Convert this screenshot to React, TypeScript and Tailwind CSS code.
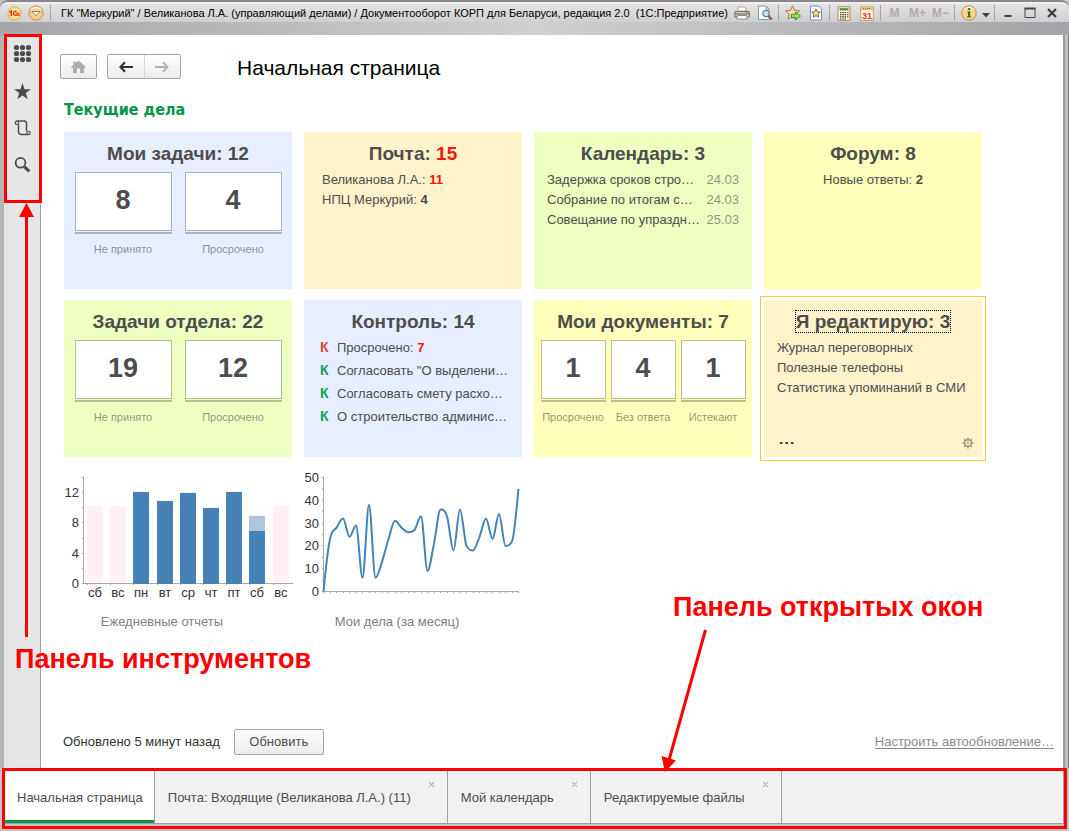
import type { ReactNode } from "react";

interface Counter {
  value: number;
  label: string;
}

interface Tab {
  title: string;
  active?: boolean;
}

const SANS = "font-['Liberation_Sans',Arial,sans-serif]";

const TABS: Tab[] = [
  { title: "Начальная страница", active: true },
  { title: "Почта: Входящие (Великанова Л.А.) (11)" },
  { title: "Мой календарь" },
  { title: "Редактируемые файлы" },
];

const EVENTS = [
  { title: "Задержка сроков стро…", date: "24.03" },
  { title: "Собрание по итогам с…", date: "24.03" },
  { title: "Совещание по упраздн…", date: "25.03" },
];

const CONTROL = [
  'Согласовать "О выделени…',
  "Согласовать смету расхо…",
  "О строительство админис…",
];

// x and top of each column; rest days are drawn pale
const BARS = [
  { day: "сб", x: 87, top: 507, rest: true },
  { day: "вс", x: 110, top: 507, rest: true },
  { day: "пн", x: 133, top: 492 },
  { day: "вт", x: 157, top: 501 },
  { day: "ср", x: 180, top: 493 },
  { day: "чт", x: 203, top: 508 },
  { day: "пт", x: 226, top: 492 },
  { day: "сб", x: 249, top: 531, extra: 516 },
  { day: "вс", x: 273, top: 507, rest: true },
];

const MONTH = [
  0, 23, 28, 32, 24, 29, 6, 38, 6, 13, 23, 31, 28, 26, 27, 33, 9, 21, 36, 33,
  18, 36, 20, 18, 24, 32, 23, 34, 20, 22, 45,
];

// Monotone cubic through the points, so peaks never overshoot.
function smoothPath(pts: [number, number][]): string {
  const n = pts.length;
  const slope = pts
    .slice(1)
    .map((p, i) => (p[1] - pts[i][1]) / (p[0] - pts[i][0]));
  const tan = pts.map((_, i) => {
    if (i === 0) return slope[0] * 1.3;
    if (i === n - 1) return slope[n - 2] * 1.3;
    const a = slope[i - 1];
    const b = slope[i];
    if (a * b <= 0) return 0;
    const m = (a + b) / 2;
    return Math.sign(m) * Math.min(Math.abs(m), 3 * Math.abs(a), 3 * Math.abs(b));
  });
  let d = `M${pts[0][0]},${pts[0][1]}`;
  for (let i = 1; i < n; i++) {
    const [x0, y0] = pts[i - 1];
    const [x1, y1] = pts[i];
    const h = (x1 - x0) / 3;
    d += `C${x0 + h},${y0 + tan[i - 1] * h} ${x1 - h},${y1 - tan[i] * h} ${x1},${y1}`;
  }
  return d;
}

function BarButton({
  label,
  className = "w-[23px]",
  children,
}: {
  label: string;
  className?: string;
  children: ReactNode;
}) {
  return (
    <button
      type="button"
      aria-label={label}
      className={`flex h-5 flex-none items-center justify-center ${className}`}
    >
      {children}
    </button>
  );
}

function Divider() {
  return <span className="mx-0.5 h-4 w-px flex-none bg-[#a3a3a3]" />;
}

function TitleBar() {
  return (
    <header className="flex h-[35px] flex-none flex-col overflow-hidden rounded-t-lg border-t-2 border-[#8b878a] bg-linear-to-r from-[#a6a6aa] via-[#d0d0d0] to-[#a4a4a8]">
      <div className="flex h-5 flex-none items-center border-t-2 border-[#efefef] bg-linear-to-b from-[#e4e4e5] to-[#cfcfd0] pr-[7px] pl-1">
        <BarButton label="Главное меню" className="ml-0.5 w-4">
          <svg width="15" height="15" viewBox="0 0 15 15">
            <circle cx="7.5" cy="7.5" r="6.6" fill="#fbe08a" stroke="#dfae4e" />
            <path d="M2.6 6.3l1.7-1.4v5.2" fill="none" stroke="#d8291c" strokeWidth="1.4" />
            <path d="M9.5 5.6a2 2 0 1 0-1.7 3.6h5" fill="none" stroke="#d8291c" strokeWidth="1.3" />
            <path d="M8.6 7.3h4" stroke="#d8291c" strokeWidth="1" />
          </svg>
        </BarButton>
        <BarButton label="Меню" className="ml-1.5 w-4">
          <svg width="16" height="16" viewBox="0 0 16 16">
            <circle cx="8" cy="8" r="7.1" fill="#f6ce93" stroke="#c98f45" />
            <path d="M3 5.2a6 6 0 0 1 10 0" fill="none" stroke="#fff3dc" strokeWidth="1.5" />
            <path d="M3.8 6.5h8.4L8 10.8z" fill="#fff" stroke="#8a5f38" strokeWidth=".8" />
          </svg>
        </BarButton>
        <span className="ml-1.5 h-4 w-px flex-none bg-[#a3a3a3]" />
        <span className="ml-2.5 min-w-0 flex-1 text-[11px] leading-[18px] whitespace-pre text-black">
          {
            'ГК "Меркурий" / Великанова Л.А. (управляющий делами) / Документооборот КОРП для Беларуси, редакция 2.0  (1С:Предприятие)'
          }
        </span>
        <BarButton label="Печать">
          <svg width="16" height="16" viewBox="0 0 16 16">
            <path d="M4 6V2h6l2 1.5V6z" fill="#fff" stroke="#999" strokeWidth=".8" />
            <path d="M1 6.5h14l.6 5.5H.6z" fill="#d9d4cb" stroke="#6f6d6b" />
            <path d="M1 9h14" stroke="#5a5a5a" />
            <rect x="11" y="7" width="2.5" height="1.2" fill="#e08a3c" />
            <path d="M3.5 10.5h9l.8 3.5H2.7z" fill="#fff" stroke="#777" strokeWidth=".8" />
          </svg>
        </BarButton>
        <BarButton label="Предварительный просмотр">
          <svg width="16" height="16" viewBox="0 0 16 16">
            <path d="M1.5 1h7.5l3 3v10.5H1.5z" fill="#fff" stroke="#7d9cc0" />
            <path d="M9 1v3h3" fill="none" stroke="#7d9cc0" />
            <circle cx="9" cy="8.5" r="3.2" fill="#cfe2f2" stroke="#6d7d8d" strokeWidth="1.2" />
            <path d="M11.5 11l3.3 3.5" stroke="#8a563f" strokeWidth="2.2" />
          </svg>
        </BarButton>
        <Divider />
        <BarButton label="Добавить в избранное">
          <svg width="16" height="16" viewBox="0 0 16 16">
            <path d="M7.5.8l2 4.7 5 .4-3.8 3.3 1.2 5-4.4-2.7-4.4 2.7 1.2-5L.6 5.9l5-.4z" fill="#fbe2ac" stroke="#9a7b52" />
            <path d="M6.5 9.2h4V7l5 4-5 4v-2.4h-4z" fill="#9be054" stroke="#2f8a1c" strokeWidth=".9" />
          </svg>
        </BarButton>
        <BarButton label="Избранное">
          <svg width="16" height="16" viewBox="0 0 16 16">
            <path d="M2.5 1h8l3 3v11h-11z" fill="#fff" stroke="#6f94bb" />
            <path d="M8 4l1.3 2.8 3 .3-2.2 2 .6 3L8 10.6l-2.7 1.5.6-3-2.2-2 3-.3z" fill="#fbd98a" stroke="#6b5a49" strokeWidth=".9" />
          </svg>
        </BarButton>
        <Divider />
        <BarButton label="Калькулятор">
          <svg width="14" height="15" viewBox="0 0 14 15">
            <rect x="1" y=".8" width="12" height="13.6" fill="#fff6da" stroke="#b08a5c" />
            <rect x="2.5" y="2.2" width="9" height="2.2" fill="#4d8c3c" />
            <path d="M3 6.5h6M3 8.7h6M3 10.9h6M3 13h6" stroke="#333" strokeWidth="1.2" strokeDasharray="1.5 .8" />
            <path d="M10 6.5h1.6M10 8.7h1.6M10 10.9h1.6" stroke="#cf3a25" strokeWidth="1.2" />
          </svg>
        </BarButton>
        <BarButton label="Календарь">
          <svg width="14" height="15" viewBox="0 0 14 15">
            <rect x=".7" y="1" width="12.6" height="13.4" fill="#fff7e6" stroke="#c99d63" />
            <rect x="1" y="1.2" width="12" height="3" fill="#f0c07c" />
            <path d="M3 2.6h8" stroke="#8f6a3d" strokeDasharray="1 1" />
            <text x="7" y="12.6" textAnchor="middle" className="fill-[#e23a1f] font-['Liberation_Sans',Arial,sans-serif] text-[9px] font-bold">
              31
            </text>
          </svg>
        </BarButton>
        <Divider />
        {["M", "M+", "M−"].map((m) => (
          <BarButton key={m} label={`Память ${m}`}>
            <span className={`${SANS} text-[12px] font-bold text-[#b3a9a5]`}>{m}</span>
          </BarButton>
        ))}
        <Divider />
        <BarButton label="Справка">
          <svg width="16" height="16" viewBox="0 0 16 16">
            <circle cx="8" cy="8" r="7.2" fill="#fbd58c" stroke="#c78a38" />
            <path d="M3 5a6 6 0 0 1 10 0" fill="none" stroke="#fff2d4" strokeWidth="1.4" />
            <path d="M7 3h2.2v2H7zM6.4 6.3h2.8v5h1v1.3H6v-1.3h1V7.5h-.6z" fill="#3f7a1e" />
          </svg>
        </BarButton>
        <BarButton label="Ещё" className="w-3 pt-1">
          <svg width="8" height="5" viewBox="0 0 8 5">
            <path d="M0 0h8L4 4.5z" fill="#444" />
          </svg>
        </BarButton>
        <Divider />
        <BarButton label="Свернуть" className="w-[21px]">
          <svg width="12" height="12" viewBox="0 0 12 12">
            <path d="M2.5 9h7" stroke="#444" strokeWidth="2" />
          </svg>
        </BarButton>
        <BarButton label="Развернуть">
          <svg width="12" height="12" viewBox="0 0 12 12">
            <path d="M1 1.5h10v9H1z" fill="none" stroke="#444" />
            <path d="M.5 1.5h11" stroke="#444" strokeWidth="2" />
          </svg>
        </BarButton>
        <BarButton label="Закрыть" className="w-[21px]">
          <svg width="10" height="10" viewBox="0 0 10 10">
            <path d="M1 1l8 8M9 1L1 9" stroke="#3d3d3d" strokeWidth="2.2" />
          </svg>
        </BarButton>
      </div>
    </header>
  );
}

function ToolPanel() {
  return (
    <aside className="relative w-[41px] flex-none border-r border-l-4 border-r-[#a0a0a0] border-l-[#b4b4b4] bg-[#e6e6e6]">
      <div className="flex flex-col items-center gap-[17px] pt-[9px]">
        <button type="button" aria-label="Разделы">
          <svg width="20" height="20" viewBox="0 0 20 20" fill="#4d4d4d">
            {[4, 10, 16].map((cy) =>
              [4.5, 10.5, 16.5].map((cx) => (
                <circle key={`${cx}-${cy}`} cx={cx} cy={cy - 0.5} r="2.6" />
              )),
            )}
          </svg>
        </button>
        <button type="button" aria-label="Избранное">
          <svg width="20" height="20" viewBox="0 0 20 20" fill="#4d4d4d">
            <path d="M10.500 2l2 6.200H19l-5.200 3.800 2 6.200-5.300-3.800-5.300 3.800 2-6.200L2 8.200h6.500z" />
          </svg>
        </button>
        <button type="button" aria-label="История">
          <svg width="20" height="20" viewBox="0 0 20 20" fill="none" stroke="#4d4d4d">
            <path d="M6.500 6.500V14a3 3 0 0 0 3 2.600h7" strokeWidth="1.5" />
            <path d="M4.700 3h7.600a2.200 2.200 0 0 1 2.200 2.200v8" strokeWidth="1.5" />
            <circle cx="4.900" cy="4.800" r="1.7" strokeWidth="1.1" />
            <circle cx="16.500" cy="14.900" r="1.7" strokeWidth="1.1" />
          </svg>
        </button>
        <button type="button" aria-label="Поиск">
          <svg width="20" height="20" viewBox="0 0 20 20" fill="none" stroke="#4d4d4d">
            <circle cx="8.500" cy="7.800" r="4.900" strokeWidth="1.8" />
            <path d="M12.500 11.800l4.800 4.600" strokeWidth="3" />
          </svg>
        </button>
      </div>
      <div className="pointer-events-none absolute -top-px -right-0.5 left-0 h-[169px] border-[3px] border-[#fe0000]" />
    </aside>
  );
}

function Tile({
  title,
  count,
  className,
  alert = false,
  focused = false,
  children,
}: {
  title: string;
  count: number;
  className: string;
  alert?: boolean;
  focused?: boolean;
  children: ReactNode;
}) {
  return (
    <section className={`relative h-[157px] pt-[11px] ${className}`}>
      <h3 className="text-center text-[19px] leading-[22px] font-bold text-[#4d4d4d]">
        <span className={focused ? "outline-1 outline-black outline-dotted" : ""}>
          {title}: <span className={alert ? "text-[#f01800]" : ""}>{count}</span>
        </span>
      </h3>
      {children}
    </section>
  );
}

function Counters({
  items,
  className,
  boxClass,
  lineClass,
}: {
  items: Counter[];
  className: string;
  boxClass: string;
  lineClass: string;
}) {
  return (
    <div className={`flex pt-[7px] ${className}`}>
      {items.map((c) => (
        <div key={c.label} className={`flex flex-none flex-col items-center ${boxClass}`}>
          <div className={`w-full border-b-2 pb-px ${lineClass}`}>
            <div
              className={`flex h-[59px] items-center justify-center border bg-white pb-1 text-[27px] leading-8 font-bold text-[#4d4d4d] ${lineClass}`}
            >
              {c.value}
            </div>
          </div>
          <span className="mt-[7px] text-[11px] leading-4 whitespace-nowrap text-[#4d4d4d]/60">
            {c.label}
          </span>
        </div>
      ))}
    </div>
  );
}

function ReportsChart() {
  return (
    <figure>
      <svg width="230" height="132" viewBox="64 468 230 132" className="overflow-visible">
        <path d="M83.5 477v106.500H293" fill="none" stroke="#a8a8a8" />
        {[477, 492, 507, 522, 538, 553, 568, 583].map((y) => (
          <path key={y} d={`M82 ${y + 0.5}h2`} stroke="#a8a8a8" />
        ))}
        {BARS.map((b) => (
          <g key={b.x}>
            <path d={`M${b.x + 0.5} 583v2`} stroke="#a8a8a8" />
            <rect x={b.x} y={(b.extra ?? b.top) - 1} width="16" height={585 - (b.extra ?? b.top) - 1} fill="#fff0f5" />
            {b.extra && (
              <rect x={b.x} y={b.extra} width="16" height={b.top - b.extra} fill="#b0c4de" />
            )}
            {!b.rest && (
              <rect x={b.x} y={b.top} width="16" height={584 - b.top} fill="#4682b4" />
            )}
            <text x={b.x + 8} y="597" textAnchor="middle" className="fill-[#333] text-[13px]">
              {b.day}
            </text>
          </g>
        ))}
        {[12, 8, 4, 0].map((v, i) => (
          <text key={v} x="79" y={[497, 527, 558, 588][i]} textAnchor="end" className="fill-[#333] text-[13px]">
            {v}
          </text>
        ))}
      </svg>
      <figcaption className="mt-3 pr-8 text-center text-[13px] leading-5 text-[#808080]">
        Ежедневные отчеты
      </figcaption>
    </figure>
  );
}

function MonthChart() {
  const pts = MONTH.map((v, i): [number, number] => [
    323.5 + i * 6.5,
    591.5 - v * 2.28,
  ]);

  return (
    <figure>
      <svg width="218" height="132" viewBox="304 468 218 132" className="overflow-visible">
        <path d="M323.5 477v114.500H519" fill="none" stroke="#a8a8a8" />
        {[0, 1, 2, 3, 4, 5, 6, 7, 8, 9, 10].map((i) => (
          <path key={i} d={`M322 ${Math.round(477 + i * 11.4) + 0.5}h2`} stroke="#a8a8a8" />
        ))}
        {pts.map(([x]) => (
          <path key={x} d={`M${Math.floor(x) + 0.5} 591v2`} stroke="#a8a8a8" />
        ))}
        <path d={smoothPath(pts)} fill="none" stroke="#4682b4" strokeWidth="2" />
        {[50, 40, 30, 20, 10, 0].map((v) => (
          <text key={v} x="319" y={Math.round(596 - v * 2.28)} textAnchor="end" className="fill-[#333] text-[13px]">
            {v}
          </text>
        ))}
      </svg>
      <figcaption className="mt-3 pr-8 text-center text-[13px] leading-5 text-[#808080]">
        Мои дела (за месяц)
      </figcaption>
    </figure>
  );
}

function Dashboard() {
  return (
    <div className="grid grid-cols-[228px_218px_218px_218px] gap-x-3 gap-y-[11px]">
      <Tile title="Мои задачи" count={12} className="bg-[#e6eeff]">
        <Counters
          items={[
            { value: 8, label: "Не принято" },
            { value: 4, label: "Просрочено" },
          ]}
          className="justify-center gap-[13px]"
          boxClass="w-[97px]"
          lineClass="border-[#acb3c0]"
        />
      </Tile>
      <Tile title="Почта" count={15} alert className="bg-[#fff3cc]">
        <ul className="px-[18px] pt-[5px] text-[13px] leading-5 text-[#4d4d4d]">
          <li>
            Великанова Л.А.: <b className="text-[#f01800]">11</b>
          </li>
          <li>
            НПЦ Меркурий: <b>4</b>
          </li>
        </ul>
      </Tile>
      <Tile title="Календарь" count={3} className="bg-[#efffc2]">
        <ul className="px-[13px] pt-[5px] text-[13px] leading-5 text-[#4d4d4d]">
          {EVENTS.map((e) => (
            <li key={e.title} className="flex justify-between">
              <span>{e.title}</span>
              <span className="text-[#4d4d4d]/60">{e.date}</span>
            </li>
          ))}
        </ul>
      </Tile>
      <Tile title="Форум" count={8} className="bg-[#fdffba]">
        <p className="pt-[5px] text-center text-[13px] leading-5 text-[#4d4d4d]">
          Новые ответы: <b>2</b>
        </p>
      </Tile>

      <Tile title="Задачи отдела" count={22} className="bg-[#efffc2]">
        <Counters
          items={[
            { value: 19, label: "Не принято" },
            { value: 12, label: "Просрочено" },
          ]}
          className="justify-center gap-[13px]"
          boxClass="w-[97px]"
          lineClass="border-[#b3bf92]"
        />
      </Tile>
      <Tile title="Контроль" count={14} className="bg-[#e6eeff]">
        <ul className="pt-[3px] pl-4 text-[13px] leading-[23px] whitespace-nowrap text-[#4d4d4d]">
          <li className="flex">
            <b className="w-[17px] flex-none text-[14px] text-[#d94f3d]">К</b>
            <span>
              Просрочено: <b className="text-[#f01800]">7</b>
            </span>
          </li>
          {CONTROL.map((c) => (
            <li key={c} className="flex">
              <b className="w-[17px] flex-none text-[14px] text-[#0fa05a]">К</b>
              <span>{c}</span>
            </li>
          ))}
        </ul>
      </Tile>
      <Tile title="Мои документы" count={7} className="bg-[#fdffba]">
        <Counters
          items={[
            { value: 1, label: "Просрочено" },
            { value: 4, label: "Без ответа" },
            { value: 1, label: "Истекают" },
          ]}
          className="justify-center gap-[5px]"
          boxClass="w-[65px]"
          lineClass="border-[#bec08c]"
        />
      </Tile>
      <Tile
        title="Я редактирую"
        count={3}
        focused
        className="flex flex-col bg-[#fff3cc] outline-1 outline-offset-3 outline-[#f8cc20]"
      >
        <ul className="px-[13px] pt-[5px] text-[13px] leading-5 text-[#4d4d4d]">
          <li>Журнал переговорных</li>
          <li>Полезные телефоны</li>
          <li>Статистика упоминаний в СМИ</li>
        </ul>
        <div className="mt-auto flex items-center justify-between px-2 pb-1.5">
          <button type="button" aria-label="Показать все" className="pl-2">
            <svg width="14" height="4" viewBox="0 0 14 4" fill="#3d3d3d">
              <path d="M0 1h2.500v2H0zM5.500 1H8v2H5.500zM11 1h2.500v2H11z" />
            </svg>
          </button>
          <button type="button" aria-label="Настроить">
            <svg width="12" height="16" viewBox="-6 -8 12 16" fill="none" stroke="#a39c84">
              <circle r="3.300" strokeWidth="1.500" />
              <circle r="1" strokeWidth=".8" />
              {[0, 45, 90, 135, 180, 225, 270, 315].map((a) => (
                <path key={a} d="M0-3.500V-5.400" strokeWidth="1.700" transform={`rotate(${a})`} />
              ))}
            </svg>
          </button>
        </div>
      </Tile>

      <ReportsChart />
      <MonthChart />
    </div>
  );
}

function OpenWindows() {
  return (
    <nav className="mr-0.5 mb-0.5 ml-0.5 flex-none border-[3px] border-[#fe0000] bg-[#c8c8c8] pb-0.5">
      <div className="flex h-[53px] border-r border-b border-[#a0a0a0] bg-[#f1f1f1]">
        {TABS.map((t) => (
          <div
            key={t.title}
            className={`relative flex border-r border-[#a0a0a0] ${t.active ? "bg-white" : ""}`}
          >
            <a
              href="#"
              className={`flex items-center text-[13px] whitespace-nowrap text-[#4d4d4d] ${
                t.active ? "border-b-[3px] border-[#009646] pt-1 pr-[11px] pl-3" : "pt-px pr-9 pl-[13px]"
              }`}
            >
              {t.title}
            </a>
            {!t.active && (
              <button type="button" aria-label="Закрыть вкладку" className="absolute top-2.5 right-3">
                <svg width="7" height="7" viewBox="0 0 7 7" className="block">
                  <path d="M1 1l5 5M6 1L1 6" stroke="#999" />
                </svg>
              </button>
            )}
          </div>
        ))}
      </div>
    </nav>
  );
}

// Red callouts that name the two panels
function Callouts() {
  return (
    <div className="pointer-events-none absolute inset-0 text-[27px] leading-8 font-bold whitespace-nowrap text-[#fe0000]">
      <svg className="absolute inset-0 h-full w-full" fill="#fe0000" stroke="#fe0000">
        <path d="M26.500 637V214" strokeWidth="3" />
        <path d="M26.500 203l7.500 14H19z" stroke="none" />
        <path d="M705.500 630L669 760" strokeWidth="3" />
        <path d="M665 772l-3.500-16 14.500 4.500z" stroke="none" />
      </svg>
      <p className="absolute top-[643px] left-[15px]">Панель инструментов</p>
      <p className="absolute top-[591px] left-[673px]">Панель открытых окон</p>
    </div>
  );
}

export default function App() {
  return (
    <div className={`relative flex min-h-screen flex-col bg-[#c4c4c4] ${SANS}`}>
      <TitleBar />
      <div className="flex flex-1">
        <ToolPanel />
        <main className="flex min-w-0 flex-1 flex-col bg-white pt-[19px] pr-[9px] pb-[13px] pl-[23px]">
          <div className="-ml-1 flex h-[25px] items-center">
            <button
              type="button"
              aria-label="Начальная страница"
              className="flex h-full w-[37px] items-center justify-center rounded-xs border border-[#a6a6a6] bg-linear-to-b from-white to-[#ececec]"
            >
              <svg width="15" height="14" viewBox="0 0 15 14" fill="#adadad">
                <path d="M7.500.5L15 7l-1 1.200-1-.8V13H9V8.500H6V13H2V7.400l-1 .8L0 7l2.500-2.200V1.500h2v1.600z" />
              </svg>
            </button>
            <div className="ml-2.5 flex h-full w-[74px] rounded-xs border border-[#a6a6a6] bg-linear-to-b from-white to-[#ececec]">
              <button
                type="button"
                aria-label="Назад"
                className="flex flex-1 items-center justify-center border-r border-[#d4d4d4]"
              >
                <svg width="14" height="12" viewBox="0 0 14 12" fill="none" stroke="#333" strokeWidth="2.200">
                  <path d="M14 6H2M6 1.300L1.500 6 6 10.700" />
                </svg>
              </button>
              <button type="button" aria-label="Вперед" className="flex flex-1 items-center justify-center">
                <svg width="14" height="12" viewBox="0 0 14 12" fill="none" stroke="#b3b3b3" strokeWidth="2">
                  <path d="M0 6h12M8 1.300L12.500 6 8 10.700" />
                </svg>
              </button>
            </div>
            <h1 className="ml-14 pt-0.5 text-[21px] leading-7 text-black">Начальная страница</h1>
          </div>
          <h2 className="mt-[19px] mb-2.5 font-['DejaVu_Sans_Condensed','Noto_Sans',sans-serif] text-[16px] leading-6 font-bold text-[#009646]">
            Текущие дела
          </h2>
          <Dashboard />
          <div className="mt-auto -ml-px flex h-[26px] items-center">
            <span className="text-[13px] text-[#333]">Обновлено 5 минут назад</span>
            <button
              type="button"
              className="ml-3.5 h-full w-[90px] rounded-xs border border-[#a6a6a6] bg-linear-to-b from-white to-[#ececec] text-[13px] text-[#4d4d4d]"
            >
              Обновить
            </button>
            <a href="#" className="ml-auto text-[13px] text-[#8c8c8c] underline underline-offset-2">
              Настроить автообновление…
            </a>
          </div>
        </main>
        <div className="w-[6px] flex-none border-r border-l-2 border-r-[#77777a] border-l-[#9c9c9e] bg-[#c0c0c0]" />
      </div>
      <OpenWindows />
      <Callouts />
    </div>
  );
}
